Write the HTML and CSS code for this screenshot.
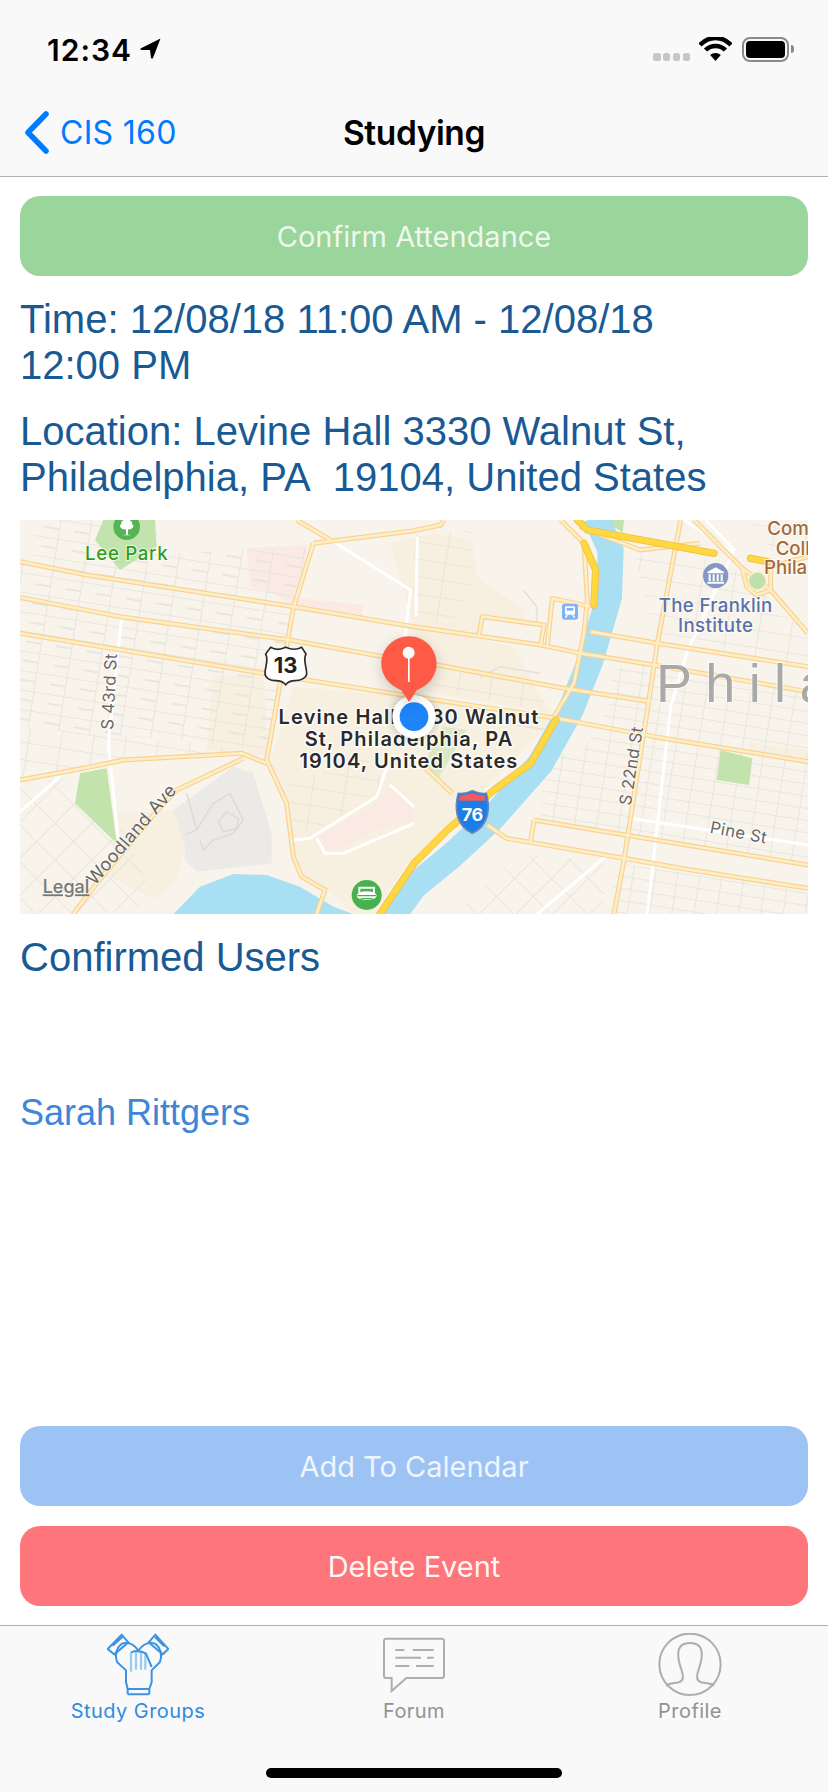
FILE: index.html
```html
<!DOCTYPE html>
<html lang="en">
<head>
<meta charset="utf-8">
<title>Studying</title>
<link rel="stylesheet" href="styles.css">
</head>
<body>
<div class="phone">
  <header class="top">
    <div class="status">
      <div class="clock">
        <span class="time">12:34</span>
        <svg class="loc" width="21" height="21" viewBox="0 0 21 21"><path d="M20.500 0.500 L0.500 10.500 Q0 12 1.500 12 L10 12 L11 20 Q12 21 13 20 Z"/></svg>
      </div>
      <div class="sys">
        <div class="dots"><i></i><i></i><i></i><i></i></div>
        <svg class="wifi" width="33" height="24" viewBox="0 0 33 24"><path d="M1 8 C10 -1.500 23 -1.500 32 8" class="wave"/><path d="M6.500 13 C12 7.500 21 7.500 26.500 13" class="wave"/><path d="M16.500 24 L11.200 18 C14 15.200 19 15.200 21.800 18 Z"/></svg>
        <div class="batt"><div class="cell"></div></div>
        <div class="nub"></div>
      </div>
    </div>
    <nav class="navbar">
      <a class="back">
        <svg class="chev" width="26" height="44" viewBox="0 0 26 44"><path d="M22 3 L4 21.500 L22 40"/></svg>
        <span>CIS 160</span>
      </a>
      <h1 class="title">Studying</h1>
    </nav>
  </header>

  <main class="content">
    <button class="btn btn-green">Confirm Attendance</button>
    <p class="info">Time: 12/08/18 11:00 AM - 12/08/18<br>12:00 PM</p>
    <p class="info">Location: Levine Hall 3330 Walnut St, Philadelphia, PA&nbsp; 19104, United States</p>

    <svg class="map" width="788" height="394" viewBox="60 30 2364 1182">
      <defs>
        <pattern id="gridA" width="92" height="58" patternUnits="userSpaceOnUse" patternTransform="rotate(9)"><path d="M0 0H92M0 0V58M46 29H92" class="gl"/></pattern>
        <pattern id="gridB" width="66" height="36" patternUnits="userSpaceOnUse" patternTransform="rotate(9)"><path d="M0 0H66M0 0V36" class="gl"/></pattern>
        <pattern id="gridC" width="78" height="78" patternUnits="userSpaceOnUse" patternTransform="rotate(45)"><path d="M0 0H78M0 0V78" class="gl"/></pattern>
        <pattern id="gridD" width="96" height="52" patternUnits="userSpaceOnUse" patternTransform="rotate(9)"><path d="M0 0H96M0 0V52" class="gl"/></pattern>
        <g id="major">
          <path d="M60 155 L260 195 L880 290 L1242 350 L1622 405 L1742 430 L1962 465 L2424 545"/>
          <path d="M60 262 L360 320 L870 390 L1150 440 L1312 465 L1692 535 L1952 575"/>
          <path d="M60 370 L790 490 L1242 560 L1672 625 L1962 680 L2424 755"/>
          <path d="M1772 365 L1972 400 L2424 470"/>
          <path d="M940 100 L880 295 L800 750 L860 880 L880 1040 L905 1100 L975 1140 L950 1212"/>
          <path d="M60 810 L250 775 L370 750 L725 730 L800 760"/>
          <path d="M730 745 L530 840 L460 915 L290 1120 L220 1212"/>
          <path d="M940 100 L1242 62 L1322 45 L1332 30"/>
          <path d="M890 30 L1000 95"/>
          <path d="M1682 30 L1752 100 L1762 270 L1752 370 L1722 520 L1662 620"/>
          <path d="M1437 375 L1447 320 L1632 345 L1622 405"/>
          <path d="M1642 405 L1657 265 L1772 290"/>
          <path d="M2042 30 L1972 400 L1942 600 L1872 1050 L1842 1212"/>
          <path d="M2082 30 L2227 175 L2312 240 L2424 370"/>
          <path d="M2227 175 L2240 230 L2270 255 L2312 240 L2312 170 L2424 140"/>
          <path d="M1602 930 L2424 1065"/>
          <path d="M1592 995 L1602 930"/>
          <path d="M1462 945 L1520 985 L1872 1045 L2042 1075 L2424 1135"/>
          <path d="M1272 770 L1357 850"/>
          <path d="M1740 50 L1920 120 L2100 100"/>
        </g>
      </defs>

      <rect class="land" x="60" y="30" width="2364" height="1182"/>

      <polygon class="tan" points="640,500 790,490 805,740 620,720"/>
      <polygon class="tan" points="355,910 520,900 555,1020 525,1120 470,1170 330,1100"/>
      <polygon class="tan" points="880,530 1242,560 1660,630 1440,850 1240,1060 1000,1060 880,1040 860,880 810,760"/>
      <polygon class="tan" points="1242,350 1540,410 1650,610 1242,540"/>
      <polygon class="tan" points="1170,100 1300,70 1420,90 1430,200 1570,300 1580,340 1440,320 1430,380 1242,350"/>
      <polygon class="tan" points="880,1050 1242,1030 1120,1212 1060,1212 975,1130 905,1100"/>
      <polygon class="tan" points="2250,700 2424,720 2424,760 2250,735"/>

      <polygon class="pink" points="740,115 925,105 880,290 820,250 750,230"/>
      <polygon class="pink" points="900,265 1090,285 1085,320 885,290"/>
      <polygon class="pink" points="950,985 1115,890 1150,950 1000,1020 975,1030"/>
      <polygon class="pink" points="1170,830 1242,900 1242,940 1150,945 1115,890"/>

      <polygon fill="url(#gridA)" points="60,150 880,285 800,720 620,700 60,650"/>
      <polygon fill="url(#gridD)" points="60,650 620,700 730,730 370,745 60,810"/>
      <polygon fill="url(#gridA)" points="100,30 480,30 470,130 920,115 880,285 260,190 100,160"/>
      <polygon fill="url(#gridC)" points="60,830 180,800 330,880 470,1180 300,1212 220,1212 60,1212"/>
      <polygon fill="url(#gridB)" points="1830,480 1940,460 2424,540 2424,1060 1620,930 1640,740 1750,720 1840,560"/>
      <polygon fill="url(#gridD)" points="1900,130 2100,130 2230,190 2424,380 2424,470 1972,400"/>
      <polygon fill="url(#gridD)" points="2250,30 2424,30 2424,130 2320,130"/>
      <polygon fill="url(#gridB)" points="1850,1060 2424,1140 2424,1212 1830,1212"/>
      <polygon fill="url(#gridC)" points="1360,1212 1560,1030 1830,1060 1800,1212"/>
      <polygon fill="url(#gridD)" points="1242,70 1420,60 1420,200 1360,330 1300,340 1242,330"/>
      <polygon fill="url(#gridD)" points="1300,470 1620,530 1640,600 1300,540"/>
      <polygon fill="url(#gridD)" points="870,820 1100,740 1160,830 950,960 880,960"/>

      <polygon class="cem" points="520,900 700,770 760,790 815,970 815,1060 590,1085 555,1050 555,1010"/>
      <path class="cemline" d="M560 850 L590 960 L555 975 M590 960 L640 880 L690 850 L730 930 L700 970 L640 990 L610 1020 L600 990 M680 905 L715 925 L710 955 L670 965 L655 935 Z"/>

      <polygon class="green" points="310,30 465,30 470,110 360,180 285,90"/>
      <polygon class="green" points="240,790 320,775 350,1000 225,880"/>
      <polygon class="green" points="2162,720 2257,745 2247,825 2150,810"/>
      <polygon class="green" points="1820,30 1872,30 1868,68 1835,45"/>
      <polygon class="green soft" points="1330,650 1400,660 1312,810 1272,770 1300,700"/>

      <path class="river" d="M1787 20 L1832 120 L1827 260 L1772 450 L1712 600 L1622 760 L1472 930 L1352 1040 L1242 1130 L1170 1230"/>
      <polygon class="water" points="520,1212 600,1130 700,1092 800,1095 900,1130 1000,1190 1060,1212"/>

      <path class="lane" d="M1520 640 L1642 660 M1440 500 L1500 470 L1620 490 M1570 240 L1610 290 L1610 340"/>

      <path class="street" d="M1000 95 L1232 240 L1215 380 M365 325 L325 700 L355 990 M60 905 L180 800 M2012 590 L1942 1212 M1892 925 L2424 1005 M880 990 L930 985 L1130 860 L1165 760 M1170 825 L1242 890 M950 985 L975 1030 L1030 1030 L1242 940 M1817 1040 L1612 1212 M2052 30 L2202 130 M2117 30 L2202 120 L2060 430 L2012 590 M1252 80 L1248 320 M1242 500 L1225 590"/>

      <use href="#major" class="casing"/>
      <use href="#major" class="road"/>

      <path class="hwy-edge" d="M1732 30 L1762 60 L2142 130 M1752 100 L1787 180 L1782 285 M1667 630 L1592 760 L1482 840 L1342 960 L1242 1060 L1140 1212 M2252 145 L2302 155"/>
      <path class="hwy" d="M1732 30 L1762 60 L2142 130 M1752 100 L1787 180 L1782 285 M1667 630 L1592 760 L1482 840 L1342 960 L1242 1060 L1140 1212 M2252 145 L2302 155"/>

      <circle class="roundabout" cx="2272" cy="213" r="27"/>

      <!-- points of interest -->
      <circle class="poi-green" cx="380" cy="50" r="40"/>
      <path class="poi-white" d="M378 74 L378 58 C360 60 356 46 364 42 C362 32 372 28 380 30 C390 28 398 34 396 42 C404 46 400 60 384 58 L384 74 L394 76 L366 76 Z"/>
      <circle class="poi-green2" cx="1100" cy="1155" r="45"/>
      <ellipse class="poi-white" cx="1100" cy="1157" rx="30" ry="13"/>
      <path class="stadium-post" d="M1078 1130 V1150 M1122 1130 V1150 M1078 1133 H1122"/>
      <path class="stadium" d="M1072 1157 H1128 M1082 1166 H1118"/>
      <rect class="poi-blue" x="1686" y="281" width="48" height="48" rx="7"/>
      <path class="poi-white" d="M1699 289 H1721 Q1725 289 1725 293 V311 Q1725 314 1722 314 H1698 Q1695 314 1695 311 V293 Q1695 289 1699 289 Z M1699 315 H1704 L1699 323 H1694 Z M1716 315 H1721 L1726 323 H1721 Z"/>
      <rect class="poi-blue" x="1700" y="294" width="20" height="8"/>
      <circle class="poi-museum" cx="2147" cy="197" r="38"/>
      <path class="poi-white" d="M2147 172 L2172 186 V190 H2122 V186 Z M2126 193 H2132 V213 H2126 Z M2138 193 H2144 V213 H2138 Z M2150 193 H2156 V213 H2150 Z M2162 193 H2168 V213 H2162 Z M2122 215 H2172 V221 H2122 Z"/>

      <!-- road shields -->
      <path class="shield-13" d="M812 412 C825 420 840 420 857 412 C875 420 890 420 905 412 L918 432 C908 450 920 470 920 490 C920 505 900 512 885 512 C870 512 862 518 857 524 C852 518 842 512 827 512 C812 512 795 505 795 490 C795 470 807 450 797 432 Z"/>
      <text class="shield-num" x="857" y="488">13</text>
      <path class="shield-76" d="M1375 850 C1390 852 1405 848 1417 842 C1430 848 1445 852 1459 850 C1470 890 1470 945 1417 970 C1364 945 1364 890 1375 850 Z"/>
      <path class="shield-red" d="M1380 855 C1392 857 1405 854 1417 848 C1430 854 1442 857 1454 855 L1457 872 H1377 Z"/>
      <text class="shield-num76" x="1417" y="932">76</text>

      <!-- labels -->
      <text class="lbl lbl-park" x="380" y="149">Lee Park</text>
      <text class="lbl lbl-road" transform="translate(339 660) rotate(-87)">S 43rd St</text>
      <text class="lbl lbl-road lbl-long" transform="translate(284 1128) rotate(-49)">Woodland Ave</text>
      <text class="lbl lbl-road" transform="translate(1892 888) rotate(-81)">S 22nd St</text>
      <text class="lbl lbl-road" transform="translate(2128 968) rotate(11)">Pine St</text>
      <text class="lbl lbl-legal" x="128" y="1150">Legal</text>
      <text class="lbl lbl-inst" x="2147" y="305">The Franklin</text>
      <text class="lbl lbl-inst" x="2147" y="365">Institute</text>
      <text class="lbl lbl-college" x="2302" y="75">Com</text>
      <text class="lbl lbl-college" x="2327" y="135">Coll</text>
      <text class="lbl lbl-college" x="2292" y="193">Phila</text>
      <text class="lbl-city" x="1968" y="576">Phila</text>
      <text class="lbl-pin" x="1227" y="642">Levine Hall 3330 Walnut</text>
      <text class="lbl-pin" x="1227" y="708">St, Philadelphia, PA</text>
      <text class="lbl-pin" x="1227" y="775">19104, United States</text>

      <!-- user location and pin -->
      <circle class="dot-ring" cx="1242" cy="620" r="65"/>
      <circle class="dot" cx="1242" cy="620" r="43"/>
      <path class="pin-body" d="M1227 576 L1204 541 C1165 525 1144 494 1144 462 C1144 416 1181 379 1227 379 C1273 379 1310 416 1310 462 C1310 494 1289 525 1250 541 Z"/>
      <circle class="pin-head" cx="1226" cy="428" r="18"/>
      <rect class="pin-stem" x="1224" y="440" width="5" height="76"/>
    </svg>

    <h2 class="info heading">Confirmed Users</h2>
    <p class="user">Sarah Rittgers</p>

    <div class="actions">
      <button class="btn btn-blue">Add To Calendar</button>
      <button class="btn btn-red">Delete Event</button>
    </div>
  </main>

  <footer class="tabbar">
    <div class="tabs">
      <a class="tab tab-on">
        <svg class="tab-ico" width="62" height="64" viewBox="78 38 186 192">
          <path class="thin" d="M150 154 V96 M165 148 V95 M180 148 V95 M193 148 V100"/>
          <path d="M140 222 H205 M140 206 H205 M140 222 V206 M205 222 V206"/>
          <path d="M140 206 L135 185 V150 L108 125 C102 105 105 85 120 72 C135 62 160 70 172 92 C185 70 210 62 225 72 C240 85 243 105 237 125 L212 150 V185 L205 206"/>
          <path d="M150 96 C165 90 180 90 195 100 L212 140"/>
          <path d="M80 86 L122 43 L142 66 L100 102 Z M95 76 L124 50 M245 102 L203 66 L223 43 L262 86 Z M222 50 L250 78"/>
        </svg>
        <span>Study Groups</span>
      </a>
      <a class="tab">
        <svg class="tab-ico" width="62" height="56" viewBox="66 50 186 164">
          <path d="M76 53 H242 Q249 53 249 60 V164 Q249 171 242 171 H136 L92 210 V171 H76 Q69 171 69 164 V60 Q69 53 76 53 Z"/>
          <path class="bars" d="M103 87 H130 M155 87 H218 M103 110 H180 M198 110 H218 M103 135 H145 M165 135 H218"/>
        </svg>
        <span>Forum</span>
      </a>
      <a class="tab">
        <svg class="tab-ico" width="64" height="64" viewBox="892 38 190 190">
          <circle cx="987" cy="131" r="91"/>
          <path d="M916 194 C935 182 966 192 966 168 C966 150 952 132 952 102 C952 78 966 68 987 68 C1008 68 1022 78 1022 102 C1022 132 1008 150 1008 168 C1008 192 1040 182 1058 194"/>
        </svg>
        <span>Profile</span>
      </a>
    </div>
    <div class="home"></div>
  </footer>
</div>
</body>
</html>
```

FILE: styles.css
```css
* { box-sizing: border-box; }
html, body { margin: 0; padding: 0; background: #fff; }

.phone {
  width: 828px;
  height: 1792px;
  display: flex;
  flex-direction: column;
  overflow: hidden;
  font-family: Inter, "Liberation Sans", sans-serif;
}

/* header */
.top { background: #f9f9f9; border-bottom: 1px solid #b2b2b2; height: 177px; flex: none; }
.status { height: 88px; display: flex; justify-content: space-between; padding: 36px 34px 0 47px; }
.clock { display: flex; align-items: flex-start; gap: 8px; }
.time { margin-top: -3px; font-size: 30px; line-height: 34px; font-weight: 600; color: #000; letter-spacing: 1px; }
.loc { margin-top: 2px; fill: #000; }
.sys { display: flex; align-items: flex-start; }
.dots { display: flex; gap: 2.400px; margin-top: 17px; margin-right: 9px; }
.dots i { display: block; width: 7.400px; height: 8px; border-radius: 2.500px; background: #c6c6c6; }
.wifi { margin-top: 1px; margin-right: 10px; fill: #000; }
.wifi .wave { fill: none; stroke: #000; stroke-width: 4.500px; }
.batt { width: 47px; height: 25px; margin-top: 1px; border: 2px solid #8a8a8a; border-radius: 8px; padding: 2px; }
.cell { width: 100%; height: 100%; background: #000; border-radius: 4px; }
.nub { width: 3px; height: 8px; margin: 9px 0 0 2px; background: #8a8a8a; border-radius: 0 3px 3px 0; }

.navbar { height: 88px; position: relative; display: flex; align-items: center; justify-content: center; padding-top: 2px; }
.back { position: absolute; left: 24px; top: 23px; display: flex; align-items: center; gap: 10px; color: #007aff; font-size: 32px; line-height: 44px; letter-spacing: .3px; }
.chev { fill: none; stroke: #007aff; stroke-width: 5.500px; stroke-linecap: round; stroke-linejoin: round; }
.title { margin: 0; font-size: 33.500px; line-height: 44px; font-weight: 600; color: #000; letter-spacing: -0.4px; }

/* content */
.content { flex: 1; min-height: 0; padding: 19px 20px 19px; display: flex; flex-direction: column; }
.btn { display: block; width: 100%; height: 80px; border: 0; border-radius: 20px; font-family: Inter, "Liberation Sans", sans-serif; font-size: 29px; font-weight: 400; padding: 0; }
.btn-green { background: #9ad59b; color: rgba(255, 255, 255, .85); }
.btn-blue { background: #9dc3f5; color: rgba(255, 255, 255, .85); }
.btn-red { background: #fe767b; color: rgba(255, 255, 255, .95); }

.info { margin: 20px 0 0; font-family: "Liberation Sans", Arial, sans-serif; font-size: 40px; line-height: 46px; font-weight: 400; color: #1a5a94; }
.map { display: block; flex: none; margin-top: 20px; }
.heading { margin-top: 20px; }
.user { margin: 113px 0 0; font-family: "Liberation Sans", Arial, sans-serif; font-size: 36px; line-height: 40px; color: #3f86d6; }
.actions { margin-top: auto; display: flex; flex-direction: column; gap: 20px; }

/* map */
.land { fill: #f9f4eb; }
.tan { fill: #f7efdf; }
.pink { fill: #fbe9e4; }
.gl { fill: none; stroke: #e4e2dc; stroke-width: 5px; }
.cem { fill: #ebeae6; }
.cemline { fill: none; stroke: #dddcd7; stroke-width: 5px; }
.green { fill: #c3e3ad; }
.soft { opacity: .55; }
.water { fill: #a8dff2; }
.river { fill: none; stroke: #a8dff2; stroke-width: 78px; stroke-linejoin: round; }
.lane { fill: none; stroke: #e4e2dc; stroke-width: 5px; }
.street { fill: none; stroke: #fff; stroke-width: 9px; stroke-linejoin: round; }
.casing { fill: none; stroke: #f9d194; stroke-width: 15px; stroke-linejoin: round; }
.road { fill: none; stroke: #fdeec4; stroke-width: 8px; stroke-linejoin: round; }
.hwy-edge { fill: none; stroke: #f5bd4b; stroke-width: 22px; stroke-linecap: round; stroke-linejoin: round; }
.hwy { fill: none; stroke: #fed83f; stroke-width: 17px; stroke-linecap: round; stroke-linejoin: round; }
.roundabout { fill: #bfe0aa; stroke: #fdeec4; stroke-width: 5px; }
.poi-green { fill: #55b456; }
.poi-green2 { fill: #47b14f; }
.poi-white { fill: #fff; }
.poi-blue { fill: #7db4f6; }
.poi-museum { fill: #8597c5; }
.stadium { fill: none; stroke: #47b14f; stroke-width: 4px; }
.stadium-post { fill: none; stroke: #fff; stroke-width: 6px; }

.shield-13 { fill: #fff; stroke: #2b2b2b; stroke-width: 5px; }
.shield-num { font-family: Inter, sans-serif; font-size: 66px; font-weight: 700; text-anchor: middle; fill: #222; }
.shield-76 { fill: #1b7ee8; stroke: #6a85b5; stroke-width: 5px; }
.shield-red { fill: #f25a5f; }
.shield-num76 { font-family: Inter, sans-serif; font-size: 54px; font-weight: 700; text-anchor: middle; fill: #fff; letter-spacing: -1px; }

.lbl { font-family: Inter, sans-serif; font-size: 56px; font-weight: 500; paint-order: stroke; stroke: rgba(255, 255, 255, .7); stroke-width: 6px; }
.lbl-park { fill: #2f9e22; text-anchor: middle; letter-spacing: 2px; }
.lbl-road { fill: #666; font-size: 50px; font-weight: 400; letter-spacing: 1px; }
.lbl-long { font-size: 54px; }
.lbl-legal { fill: #777; font-size: 54px; text-decoration: underline; stroke: none; }
.lbl-inst { fill: #5a70a8; text-anchor: middle; letter-spacing: 1px; }
.lbl-college { fill: #a16a3c; }
.lbl-city { font-family: "Liberation Sans", sans-serif; font-size: 162px; fill: #a9a9a7; letter-spacing: 40px; paint-order: stroke; stroke: rgba(255, 255, 255, .6); stroke-width: 6px; }
.lbl-pin { font-family: Inter, sans-serif; font-size: 60px; font-weight: 600; text-anchor: middle; fill: #2a2a2a; letter-spacing: 3.400px; paint-order: stroke; stroke: rgba(255, 255, 255, .8); stroke-width: 9px; }

.dot-ring { fill: #fff; filter: drop-shadow(0 0 12px rgba(0, 0, 0, .25)); }
.dot { fill: #1e84f8; }
.pin-body { fill: #ff5a45; filter: drop-shadow(0 14px 20px rgba(0, 0, 0, .18)); }
.pin-head { fill: #fff; }
.pin-stem { fill: #fff; }

/* tab bar */
.tabbar { flex: none; height: 167px; background: #f9f9f9; border-top: 1px solid #b2b2b2; }
.tabs { display: grid; grid-template-columns: repeat(3, 1fr); height: 120px; }
.tab { display: flex; flex-direction: column; align-items: center; color: #929292; font-size: 20px; line-height: 24px; letter-spacing: .45px; padding-top: 7px; }
.tab span { margin-top: 2px; }
.tab-ico { height: 64px; fill: none; stroke: #aeaeae; stroke-width: 6px; }
.tab-ico .bars { stroke-width: 6px; }
.tab-on { color: #2f8be0; }
.tab-on .tab-ico { stroke: #3d93e3; stroke-width: 6px; }
.tab-on .thin { stroke: #9ecbf2; stroke-width: 7px; }
.home { width: 296px; height: 10px; margin: 22px auto 0; border-radius: 5px; background: #000; }
```
